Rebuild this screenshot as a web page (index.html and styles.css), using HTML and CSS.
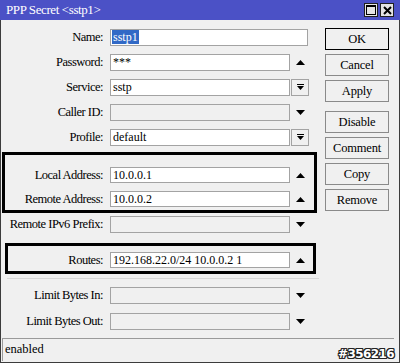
FILE: index.html
```html
<!DOCTYPE html>
<html>
<head>
<meta charset="utf-8">
<link rel="stylesheet" href="styles.css">
</head>
<body>
<div class="window">
  <div class="titlebar">
    <span class="title">PPP Secret &lt;sstp1&gt;</span>
    <div class="tbtns">
      <span class="tbtn"><svg width="10" height="10" viewBox="0 0 10 10"><rect x="0.5" y="0.5" width="9" height="9" fill="none" stroke="#000"/><rect x="0" y="0" width="10" height="2" fill="#000"/></svg></span>
      <span class="tbtn"><svg width="9" height="9" viewBox="0 0 9 9"><path d="M1 1 L8 8 M8 1 L1 8" stroke="#000" stroke-width="2"/></svg></span>
    </div>
  </div>
  <div class="content">
    <div class="form">
      <div class="row first">
        <span class="label">Name:</span>
        <span class="field wide"><span class="sel">sstp1</span></span>
      </div>
      <div class="row">
        <span class="label">Password:</span>
        <span class="field">***</span>
        <span class="arrow"><svg width="9" height="5" viewBox="0 0 9 5"><polygon points="4.5,0 9,5 0,5" fill="#000"/></svg></span>
      </div>
      <div class="row">
        <span class="label">Service:</span>
        <span class="field">sstp</span>
        <span class="ddbtn"><svg width="7" height="7" viewBox="0 0 7 7"><rect x="0" y="0" width="7" height="1" fill="#000"/><polygon points="0,2 7,2 3.5,6" fill="#000"/></svg></span>
      </div>
      <div class="row">
        <span class="label">Caller ID:</span>
        <span class="field off"></span>
        <span class="arrow"><svg width="9" height="5" viewBox="0 0 9 5"><polygon points="0,0 9,0 4.5,5" fill="#000"/></svg></span>
      </div>
      <div class="row">
        <span class="label">Profile:</span>
        <span class="field">default</span>
        <span class="ddbtn"><svg width="7" height="7" viewBox="0 0 7 7"><rect x="0" y="0" width="7" height="1" fill="#000"/><polygon points="0,2 7,2 3.5,6" fill="#000"/></svg></span>
      </div>
      <div class="box box1">
        <div class="row">
          <span class="label">Local Address:</span>
          <span class="field">10.0.0.1</span>
          <span class="arrow"><svg width="9" height="5" viewBox="0 0 9 5"><polygon points="4.5,0 9,5 0,5" fill="#000"/></svg></span>
        </div>
        <div class="row">
          <span class="label">Remote Address:</span>
          <span class="field">10.0.0.2</span>
          <span class="arrow"><svg width="9" height="5" viewBox="0 0 9 5"><polygon points="4.5,0 9,5 0,5" fill="#000"/></svg></span>
        </div>
      </div>
      <div class="row ipv6">
        <span class="label">Remote IPv6 Prefix:</span>
        <span class="field off"></span>
        <span class="arrow"><svg width="9" height="5" viewBox="0 0 9 5"><polygon points="0,0 9,0 4.5,5" fill="#000"/></svg></span>
      </div>
      <div class="box box2">
        <div class="row">
          <span class="label">Routes:</span>
          <span class="field">192.168.22.0/24 10.0.0.2 1</span>
          <span class="arrow"><svg width="9" height="5" viewBox="0 0 9 5"><polygon points="4.5,0 9,5 0,5" fill="#000"/></svg></span>
        </div>
      </div>
      <div class="sep"></div>
      <div class="row lim">
        <span class="label">Limit Bytes In:</span>
        <span class="field off"></span>
        <span class="arrow"><svg width="9" height="5" viewBox="0 0 9 5"><polygon points="0,0 9,0 4.5,5" fill="#000"/></svg></span>
      </div>
      <div class="row lim2">
        <span class="label">Limit Bytes Out:</span>
        <span class="field off"></span>
        <span class="arrow"><svg width="9" height="5" viewBox="0 0 9 5"><polygon points="0,0 9,0 4.5,5" fill="#000"/></svg></span>
      </div>
    </div>
    <div class="buttons">
      <span class="btn default">OK</span>
      <span class="btn">Cancel</span>
      <span class="btn">Apply</span>
      <span class="btn gap">Disable</span>
      <span class="btn">Comment</span>
      <span class="btn">Copy</span>
      <span class="btn">Remove</span>
    </div>
  </div>
  <div class="status">
    <span class="stext">enabled</span>
    <span class="mark">#356216</span>
  </div>
</div>
</body>
</html>
```

FILE: styles.css
```css
* { box-sizing: border-box; }
html, body { margin: 0; padding: 0; }
body {
  width: 400px;
  height: 363px;
  overflow: hidden;
  font-family: "Liberation Serif", "DejaVu Serif", serif;
  font-size: 12px;
  color: #000;
  background: #f0f0f0;
}
.window {
  width: 400px;
  height: 363px;
  border: 1px solid #3c3c3c;
  border-top: none;
  background: #f0f0f0;
  display: flex;
  flex-direction: column;
}
.titlebar {
  height: 20px;
  margin: 0 -1px;
  background: #4b51c6;
  display: flex;
  align-items: center;
  justify-content: space-between;
  padding: 0 6px 0 6px;
}
.title {
  color: #fff;
  font-size: 13px;
  letter-spacing: -0.4px;
}
.tbtns {
  display: flex;
  gap: 2px;
}
.tbtn {
  width: 14px;
  height: 14px;
  background: #e4e4e4;
  border: 1px solid #202020;
  display: flex;
  align-items: center;
  justify-content: center;
}
.content {
  display: flex;
  flex: 1;
}
.form {
  width: 318px;
  padding-top: 9px;
  --lw: 102px;
}
.row {
  display: flex;
  align-items: center;
  height: 17px;
  margin-bottom: 8px;
}
.label {
  width: var(--lw);
  text-align: right;
  margin-right: 7px;
  white-space: nowrap;
  font-size: 12.5px;
  letter-spacing: -0.5px;
}
.field {
  width: 180px;
  height: 17px;
  background: #fff;
  border: 1px solid #a3a3a3;
  padding: 0 2px;
  line-height: 15px;
  white-space: nowrap;
  overflow: hidden;
}
.field.wide { width: 198px; }
.field.off { background: #f0f0f0; }
.sel {
  background: #3169c6;
  color: #fff;
  padding: 0 1px;
  margin-left: -1px;
}
.arrow {
  width: 18px;
  display: flex;
  justify-content: center;
  padding-left: 2px;
}
.ddbtn {
  width: 18px;
  height: 17px;
  margin-left: 1px;
  border: 1px solid #a3a3a3;
  background: #f0f0f0;
  display: flex;
  align-items: center;
  justify-content: center;
}
.box {
  border: 3px solid #000;
}
.box .row:last-child { margin-bottom: 0; }
.box1 {
  margin: -2px 2px 0 1px;
  padding: 12px 0 3px 0;
  --lw: 98px;
}
.box1 .row { height: 16px; }
.box1 .field { height: 16px; line-height: 14px; }
.box2 {
  margin: 10px 3px 0 4px;
  padding: 6px 0 3px 0;
  --lw: 95px;
}
.box2 .row { height: 16px; }
.box2 .field { height: 16px; line-height: 14px; }
.ipv6 { margin-top: 3px; margin-bottom: 0; }
.sep {
  height: 1px;
  background: #d8d8d8;
  margin: 4px 0 8px 6px;
}
.lim { margin-bottom: 9px; }
.buttons {
  padding-top: 8px;
  padding-left: 6px;
  display: flex;
  flex-direction: column;
  gap: 4px;
}
.btn {
  width: 64px;
  height: 22px;
  border: 1px solid #8a8a8a;
  background: #f0f0f0;
  display: flex;
  align-items: center;
  justify-content: center;
  font-size: 12.5px;
  letter-spacing: -0.2px;
}
.btn.default { border: 1px solid #000; }
.btn.gap { margin-top: 5px; }
.status {
  margin: 0 5px 1px 1px;
  height: 23px;
  border-top: 1px solid #9a9a9a;
  border-left: 1px solid #9a9a9a;
  display: flex;
  align-items: flex-end;
  justify-content: space-between;
  padding: 0 0 2px 2px;
}
.stext { line-height: 16px; margin-bottom: 2px; font-size: 12.5px; }
.mark {
  font-family: "DejaVu Sans", sans-serif;
  font-weight: bold;
  font-size: 12px;
  color: #fff;
  letter-spacing: -0.6px;
  margin-right: 0;
  margin-bottom: -2px;
  text-shadow: 1px 0 0 #222, -1px 0 0 #222, 0 1px 0 #222, 0 -1px 0 #222, 1px 1px 0 #222, -1px -1px 0 #222, 1px -1px 0 #222, -1px 1px 0 #222;
}
```
